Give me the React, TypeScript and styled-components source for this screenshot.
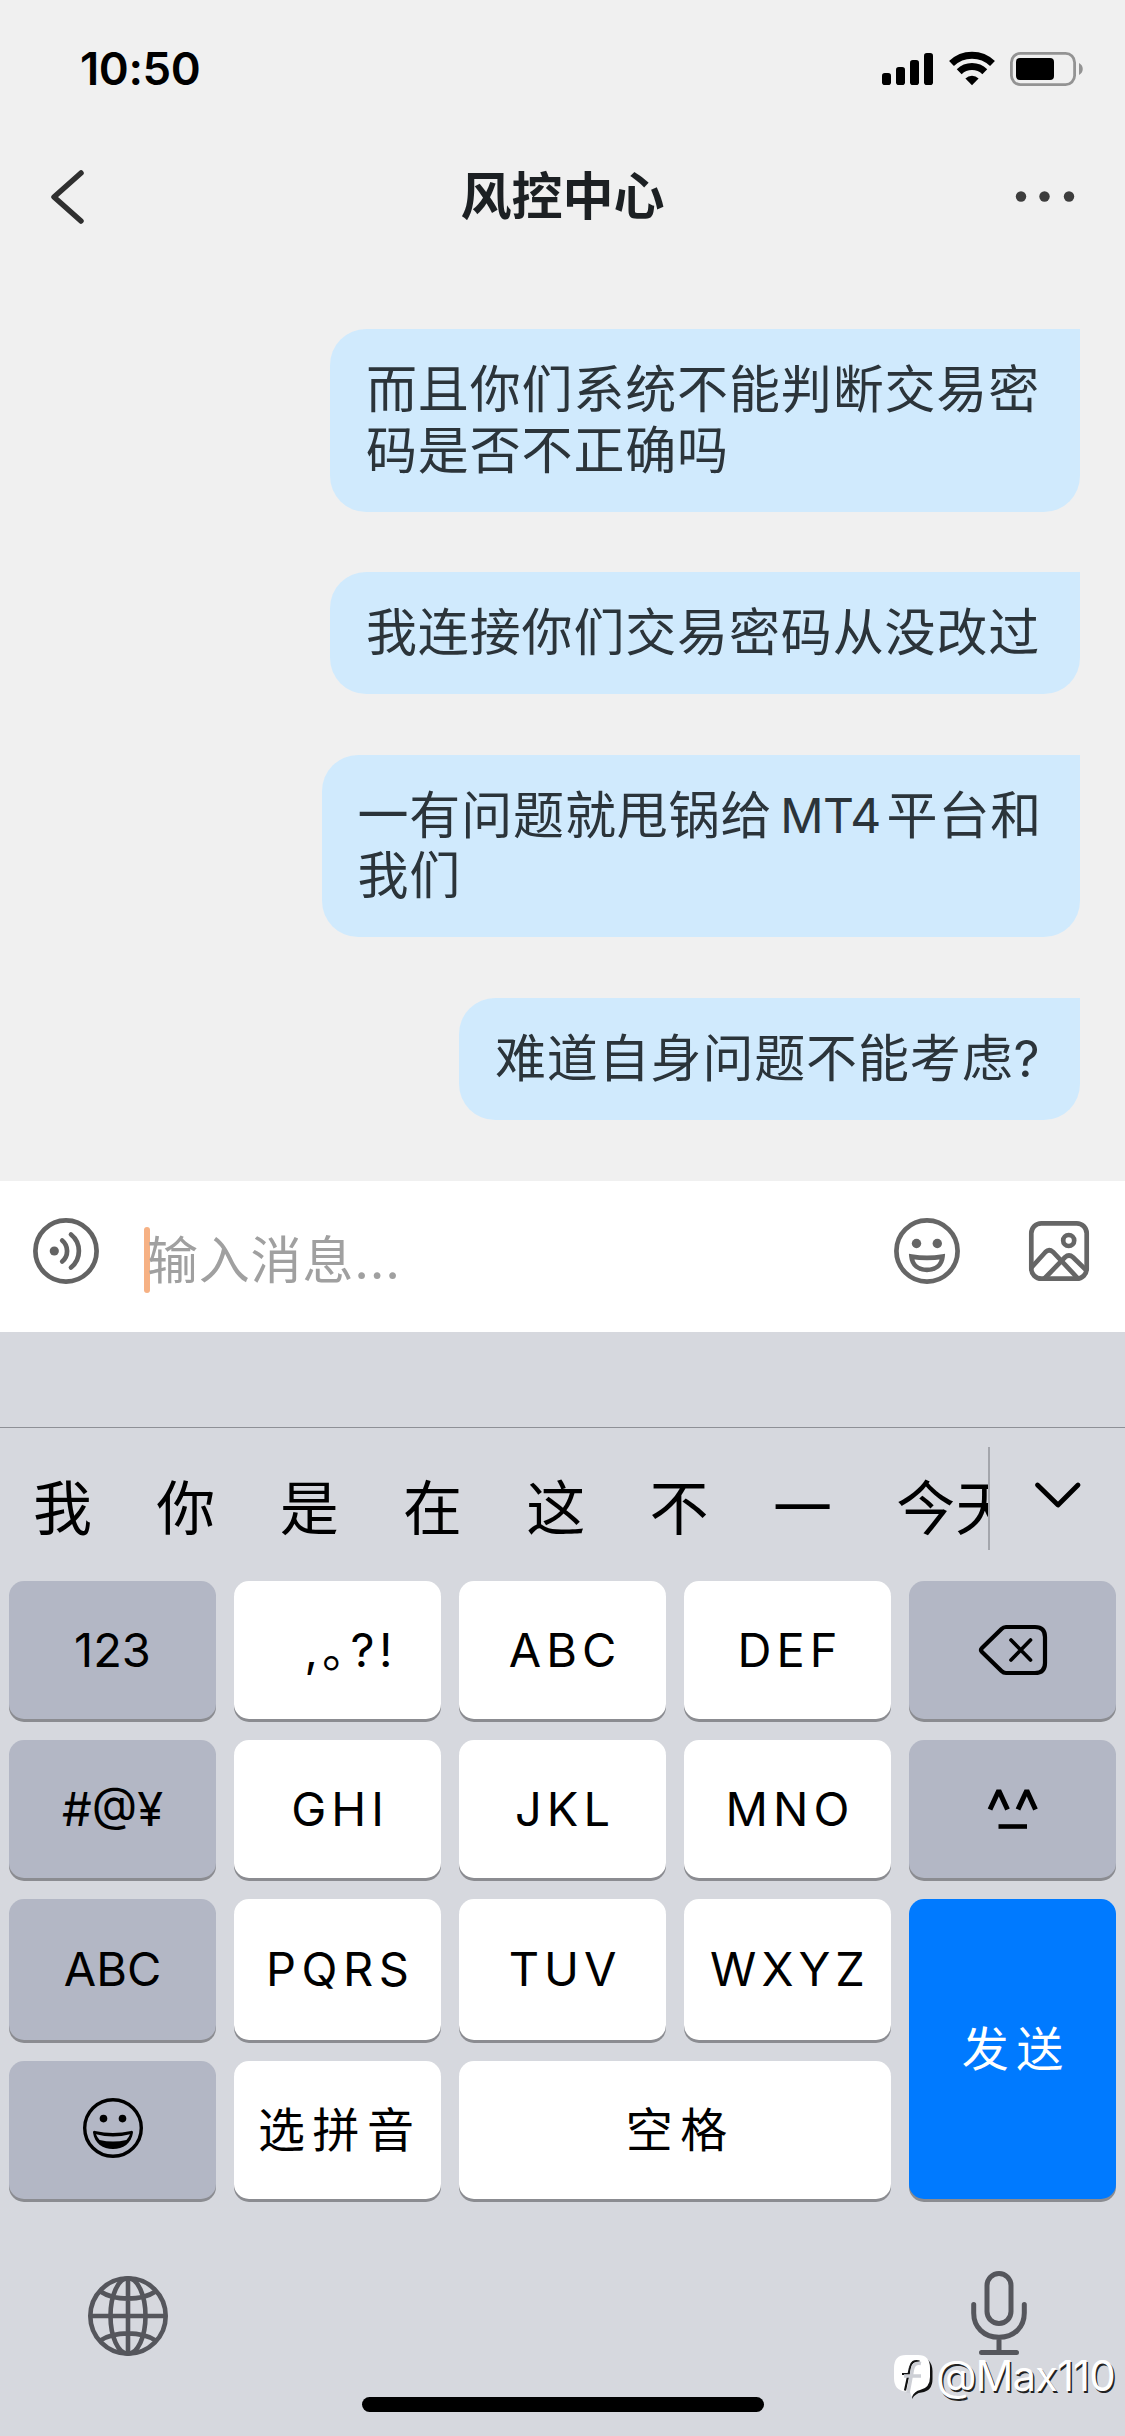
import React from "react";
import styled, { createGlobalStyle } from "styled-components";

const GlobalStyle = createGlobalStyle`
  * { box-sizing: border-box; }
  html, body { margin: 0; padding: 0; background: #f0f0f0; }
  body { font-family: Inter, "Noto Sans CJK SC", sans-serif; }
`;

const Screen = styled.div`
  width: 1125px;
  height: 2436px;
  display: flex;
  flex-direction: column;
  background: #f0f0f0;
  overflow: hidden;
`;

const StatusBar = styled.div`
  height: 132px;
  display: flex;
  justify-content: space-between;
  padding: 42px 41px 0 80px;
`;

const Clock = styled.div`
  height: 54px;
  line-height: 54px;
  font-size: 45.5px;
  font-weight: 600;
  letter-spacing: -0.4px;
  color: #000;
`;

const StatusIcons = styled.div`
  display: flex;
  gap: 15px;
  padding-top: 10px;
`;

const NavBar = styled.div`
  height: 130px;
  display: grid;
  grid-template-columns: 240px 1fr 240px;
  align-items: center;
`;

const BackSlot = styled.div`
  display: flex;
  padding-left: 48px;
`;

const MoreSlot = styled.div`
  display: flex;
  justify-content: flex-end;
  padding-right: 48px;
`;

const Title = styled.h1`
  margin: 0;
  text-align: center;
  font-size: 51px;
  line-height: 72px;
  font-weight: 600;
  color: #1c2023;
`;

const Messages = styled.div`
  height: 919px;
  display: flex;
  flex-direction: column;
  align-items: flex-end;
  gap: 60.5px;
  padding: 67px 45px 0 0;
`;

const Bubble = styled.div<{ $width: number; $lines: number }>`
  width: ${(p) => p.$width}px;
  height: ${(p) => 61.3 + p.$lines * 60.7}px;
  padding: 31px 0 0 36px;
  border-radius: 36px 0 36px 36px;
  background: #d0eafd;
  color: #2b343a;
  font-size: 51px;
  line-height: 60.7px;
  letter-spacing: 0.85px;
`;

const Line = styled.div`
  display: flex;
  height: 60.7px;
  white-space: nowrap;
`;

const Latin = styled.span`
  font-size: 48px;
  letter-spacing: -0.6px;
  margin: 0 6px 0 8px;
`;

const Composer = styled.div`
  height: 151px;
  display: flex;
  align-items: center;
  background: #fff;
  padding: 0 33px 11px 33px;
`;

const Cursor = styled.div`
  width: 6px;
  height: 66px;
  margin: 17px 0 0 45px;
  border-radius: 3px;
  background: #f6b184;
`;

const Placeholder = styled.div`
  flex: 1;
  margin: 19px 0 0 -3px;
  font-size: 51px;
  line-height: 66px;
  letter-spacing: 0.8px;
  font-weight: 400;
  color: #a0a0a0;
`;

const ComposerActions = styled.div`
  display: flex;
  align-items: center;
  gap: 66px;
`;

const Keyboard = styled.div`
  flex: 1;
  display: flex;
  flex-direction: column;
  background: #d6d8de;
`;

const AccessoryStrip = styled.div`
  height: 96px;
  border-bottom: 1px solid #8e9096;
`;

const CandidateBar = styled.div`
  height: 153px;
  display: flex;
`;

const CandidateList = styled.div`
  width: 990px;
  height: 142px;
  display: flex;
  gap: 64.3px;
  padding: 39px 0 0 33px;
  overflow: hidden;
  white-space: nowrap;
  font-size: 59px;
  line-height: 84px;
  color: #000;
`;

const Candidate = styled.span`
  flex: none;
`;

const CandidateDivider = styled.div`
  width: 5px;
  height: 103px;
  margin: 19px 0 0 -5px;
  border-right: 2px solid #a4a6ac;
`;

const ExpandSlot = styled.div`
  flex: 1;
  display: flex;
  justify-content: center;
  padding: 52px 0 0 0;
`;

const Keys = styled.div`
  display: grid;
  grid-template-columns: repeat(5, 207px);
  grid-template-rows: 138px 138px 141px 138px;
  column-gap: 18px;
  row-gap: 21px;
  padding: 0 9px;
`;

type Tone = "light" | "dark" | "send";

const toneFill: Record<Tone, string> = { light: "#fff", dark: "#b3b7c5", send: "#007aff" };

const Key = styled.button<{ $tone?: Tone; $cols?: number; $rows?: number; $tracking?: number; $nudge?: number; $lift?: number }>`
  grid-column: span ${(p) => p.$cols ?? 1};
  grid-row: span ${(p) => p.$rows ?? 1};
  display: flex;
  align-items: center;
  justify-content: center;
  border: 0;
  margin: 0;
  padding: 0 0 ${(p) => p.$lift ?? 0}px ${(p) => (p.$tracking ?? 0) + (p.$nudge ?? 0)}px;
  border-radius: 15px;
  background: ${(p) => toneFill[p.$tone ?? "light"]};
  box-shadow: 0 3px 0 #8b8c91;
  font-family: inherit;
  font-size: 47px;
  line-height: 60px;
  letter-spacing: ${(p) => p.$tracking ?? 0}px;
  color: ${(p) => (p.$tone === "send" ? "#fff" : "#000")};
`;

const KeyboardFooter = styled.div`
  flex: 1;
  display: flex;
  justify-content: space-between;
  align-items: flex-start;
  padding: 72px 98px 0 88px;
`;

const GlobeSlot = styled.div`
  display: flex;
  padding-top: 5px;
`;

const HomeIndicator = styled.div`
  align-self: center;
  width: 402px;
  height: 15px;
  margin-bottom: 24px;
  border-radius: 8px;
  background: #000;
`;

const Watermark = styled.div`
  position: absolute;
  left: 892px;
  top: 2351px;
  display: flex;
  align-items: center;
  gap: 1px;
`;

const WatermarkName = styled.span`
  font-size: 42px;
  line-height: 50px;
  font-weight: 400;
  color: #fff;
  letter-spacing: -1px;
  text-shadow: 1.5px 1.5px 0.5px #222;
`;

const Svg = styled.svg`
  display: block;
  flex: none;
  overflow: visible;
`;

const Signal = () => (
  <Svg width="52" height="33" viewBox="0 0 52 33">
    <rect x="0" y="21" width="9" height="12" rx="2.8" />
    <rect x="14" y="15" width="9" height="18" rx="2.8" />
    <rect x="28" y="8" width="9" height="25" rx="2.8" />
    <rect x="42" y="1" width="9" height="32" rx="2.8" />
  </Svg>
);

const Wifi = () => (
  <Svg width="46" height="33" viewBox="0 0 46 33">
    <path d="M2.5 11.6a29.5 29.5 0 0 1 41 0" fill="none" stroke="#000" strokeWidth="7" />
    <path d="M10.2 19.8a18.4 18.4 0 0 1 25.6 0" fill="none" stroke="#000" strokeWidth="7" />
    <path d="M16.4 26.4a9.5 9.5 0 0 1 13.2 0L23 33.2z" />
  </Svg>
);

const Battery = () => (
  <Svg width="74" height="34" viewBox="0 0 74 34">
    <rect x="1.4" y="1.4" width="63.200" height="31.200" rx="9" fill="none" stroke="#939393" strokeWidth="2.800" />
    <rect x="6" y="6" width="38" height="22" rx="4" />
    <path d="M69 11c5 2.500 5 9.500 0 12z" fill="#939393" />
  </Svg>
);

const Back = () => (
  <Svg width="40" height="60" viewBox="0 0 40 60">
    <path d="M33 6 6 30l27 24" fill="none" stroke="#2f2f2f" strokeWidth="5.500" strokeLinecap="round" strokeLinejoin="round" />
  </Svg>
);

const More = () => (
  <Svg width="62" height="12" viewBox="0 0 62 12" fill="#3d3d3d">
    <circle cx="6" cy="5.500" r="5.200" />
    <circle cx="29.500" cy="5.500" r="5.200" />
    <circle cx="54" cy="5.500" r="5.200" />
  </Svg>
);

const Voice = () => (
  <Svg width="66" height="66" viewBox="0 0 66 66" fill="none" stroke="#636363" strokeWidth="4.700" strokeLinecap="round">
    <circle cx="33" cy="33" r="30.600" />
    <circle cx="21.300" cy="33" r="4.600" fill="#636363" stroke="none" />
    <path d="M29.200 22.500c6.500 5.500 6.500 15.500 0 21" />
    <path d="M38 16.500c10.500 8.500 10.500 24.500 0 33" />
  </Svg>
);

const Smile = () => (
  <Svg width="66" height="66" viewBox="0 0 66 66" fill="none" stroke="#666" strokeWidth="4.700">
    <circle cx="33" cy="33" r="30.600" />
    <circle cx="22.500" cy="25.500" r="4.700" fill="#666" stroke="none" />
    <circle cx="43.300" cy="25.500" r="4.700" fill="#666" stroke="none" />
    <path d="M17.500 38.600c10 1.600 21 1.600 31 0-.8 8.800-7 13.200-15.500 13.200s-14.700-4.400-15.500-13.200z" />
  </Svg>
);

const Picture = () => (
  <Svg width="66" height="66" viewBox="0 0 66 66" fill="none" stroke="#666" strokeWidth="4.700">
    <rect x="5.300" y="5.300" width="55.400" height="55.400" rx="10" />
    <circle cx="42.700" cy="22.500" r="5.500" />
    <path d="M5.500 49.500 19.500 34q3.500-3.500 7.500 0L52 60.500" />
    <path d="M18.500 60.500 39 39.300q4-3.500 8 0L60.500 52.500" />
  </Svg>
);

const ChevronDown = () => (
  <Svg width="46" height="28" viewBox="0 0 46 28">
    <path d="M2.500 5 23 25 43 5" fill="none" stroke="#000" strokeWidth="4.800" strokeLinecap="round" strokeLinejoin="round" />
  </Svg>
);

const Backspace = () => (
  <Svg width="68" height="50" viewBox="0 0 68 50" fill="none" stroke="#000" strokeWidth="4.200" strokeLinejoin="round" strokeLinecap="round">
    <path d="M27 2h29q10 0 10 10v26q0 10-10 10H27q-2.500 0-4.500-2L3 27q-2-2 0-4L22.500 4q2-2 4.500-2z" />
    <path d="m32 15 19.500 20M51.500 15 32 35" strokeWidth="3.700" />
  </Svg>
);

const Kaomoji = () => (
  <Svg width="50" height="42" viewBox="0 0 50 42" fill="none" stroke="#000" strokeWidth="5" strokeLinejoin="bevel">
    <path d="M2 21.500 10.800 2.500 19.500 21.500M30 21.500 38.800 2.500 47.500 21.500" />
    <path d="M10.500 38.500h28.500" strokeWidth="4.600" />
  </Svg>
);

const EmojiKey = () => (
  <Svg width="60" height="60" viewBox="0 0 60 60">
    <circle cx="30" cy="30" r="28.300" fill="none" stroke="#000" strokeWidth="3.400" />
    <circle cx="20.500" cy="20.600" r="3.800" />
    <circle cx="39.500" cy="20.600" r="3.800" />
    <path d="M10 34.500q-.2-2 2-1.600 18 4.200 36 0 2.200-.4 2 1.600C48.500 45.500 40 51 30 51S11.500 45.500 10 34.500z" />
    <path d="M13 36.200q17 4.800 34 0-1.300 3.600-3.600 5.700-13.400 3.400-26.800 0-2.300-2.100-3.600-5.700z" fill="#b3b7c5" />
  </Svg>
);

const Globe = () => (
  <Svg width="80" height="80" viewBox="0 0 80 80" fill="none" stroke="#55565c" strokeWidth="4.600">
    <circle cx="40" cy="40" r="37.700" />
    <ellipse cx="40" cy="40" rx="17.500" ry="37.700" />
    <path d="M40 2v76M2 40h76M12.500 15.500c14 9.500 41 9.500 55 0M12.500 64.500c14-9.500 41-9.500 55 0" />
  </Svg>
);

const Mic = () => (
  <Svg width="56" height="84" viewBox="0 0 56 84" fill="none" stroke="#55565c" strokeWidth="5" strokeLinecap="round">
    <rect x="16" y="2.500" width="24" height="50" rx="12" />
    <path d="M2.700 33.500V42c0 14 10 24.300 25.300 24.300S53.300 56 53.300 42v-8.500M28 67v14M10.500 81.500h35" />
  </Svg>
);

const WatermarkLogo = () => (
  <Svg width="43" height="48" viewBox="0 0 43 48">
    <path d="M26 5q14 0 14.500 14v8q0 12-11 13.500-6 .5-9.500 6.500l1-8z" fill="#111" />
    <path d="M14 3h12q12 0 12 13v9q0 11-10 13-5 1-8.500 7l-1.500-5.500h-5Q2 38 2 26V16Q2 3 14 3z" fill="#fff" />
    <path d="M27.500 9.500q-8-2-9.500 6L13 38.500M10 22h8" fill="none" stroke="#111" strokeWidth="2.200" />
    <path d="M29 11.500q-7-1.500-8.500 5.500L16 41M12 24h17" fill="none" stroke="#cdcfd5" strokeWidth="3.600" />
  </Svg>
);

const candidates = ["我", "你", "是", "在", "这", "不", "一", "今天"];

export default function App() {
  return (
    <Screen>
      <GlobalStyle />
      <StatusBar>
        <Clock>10:50</Clock>
        <StatusIcons>
          <Signal />
          <Wifi />
          <Battery />
        </StatusIcons>
      </StatusBar>
      <NavBar>
        <BackSlot><Back /></BackSlot>
        <Title>风控中心</Title>
        <MoreSlot><More /></MoreSlot>
      </NavBar>
      <Messages>
        <Bubble $width={750} $lines={2}>
          <Line>而且你们系统不能判断交易密</Line>
          <Line>码是否不正确吗</Line>
        </Bubble>
        <Bubble $width={750} $lines={1}>
          <Line>我连接你们交易密码从没改过</Line>
        </Bubble>
        <Bubble $width={758.500} $lines={2}>
          <Line><span>一有问题就甩锅给</span><Latin>MT4</Latin><span>平台和</span></Line>
          <Line>我们</Line>
        </Bubble>
        <Bubble $width={621} $lines={1}>
          <Line>难道自身问题不能考虑?</Line>
        </Bubble>
      </Messages>
      <Composer>
        <Voice />
        <Cursor />
        <Placeholder>输入消息...</Placeholder>
        <ComposerActions>
          <Smile />
          <Picture />
        </ComposerActions>
      </Composer>
      <Keyboard>
        <AccessoryStrip />
        <CandidateBar>
          <CandidateList>
            {candidates.map((c) => <Candidate key={c}>{c}</Candidate>)}
          </CandidateList>
          <CandidateDivider />
          <ExpandSlot><ChevronDown /></ExpandSlot>
        </CandidateBar>
        <Keys>
          <Key $tone="dark">123</Key>
          <Key $tracking={4.500} $nudge={22}>,｡?!</Key>
          <Key $tracking={5}>ABC</Key>
          <Key $tracking={5}>DEF</Key>
          <Key $tone="dark"><Backspace /></Key>
          <Key $tone="dark">#@¥</Key>
          <Key $tracking={5}>GHI</Key>
          <Key $tracking={5}>JKL</Key>
          <Key $tracking={5}>MNO</Key>
          <Key $tone="dark"><Kaomoji /></Key>
          <Key $tone="dark" $lift={1}>ABC</Key>
          <Key $tracking={5.500} $lift={1}>PQRS</Key>
          <Key $tracking={5} $lift={1}>TUV</Key>
          <Key $tracking={5} $lift={1}>WXYZ</Key>
          <Key $tone="send" $rows={2} $tracking={7.500}>发送</Key>
          <Key $tone="dark" $lift={4}><EmojiKey /></Key>
          <Key $tracking={7.500} $nudge={-3}>选拼音</Key>
          <Key $cols={2} $tracking={7.500} $nudge={3}>空格</Key>
        </Keys>
        <KeyboardFooter>
          <GlobeSlot><Globe /></GlobeSlot>
          <Mic />
        </KeyboardFooter>
        <HomeIndicator />
      </Keyboard>
      <Watermark>
        <WatermarkLogo />
        <WatermarkName>@Max110</WatermarkName>
      </Watermark>
    </Screen>
  );
}
